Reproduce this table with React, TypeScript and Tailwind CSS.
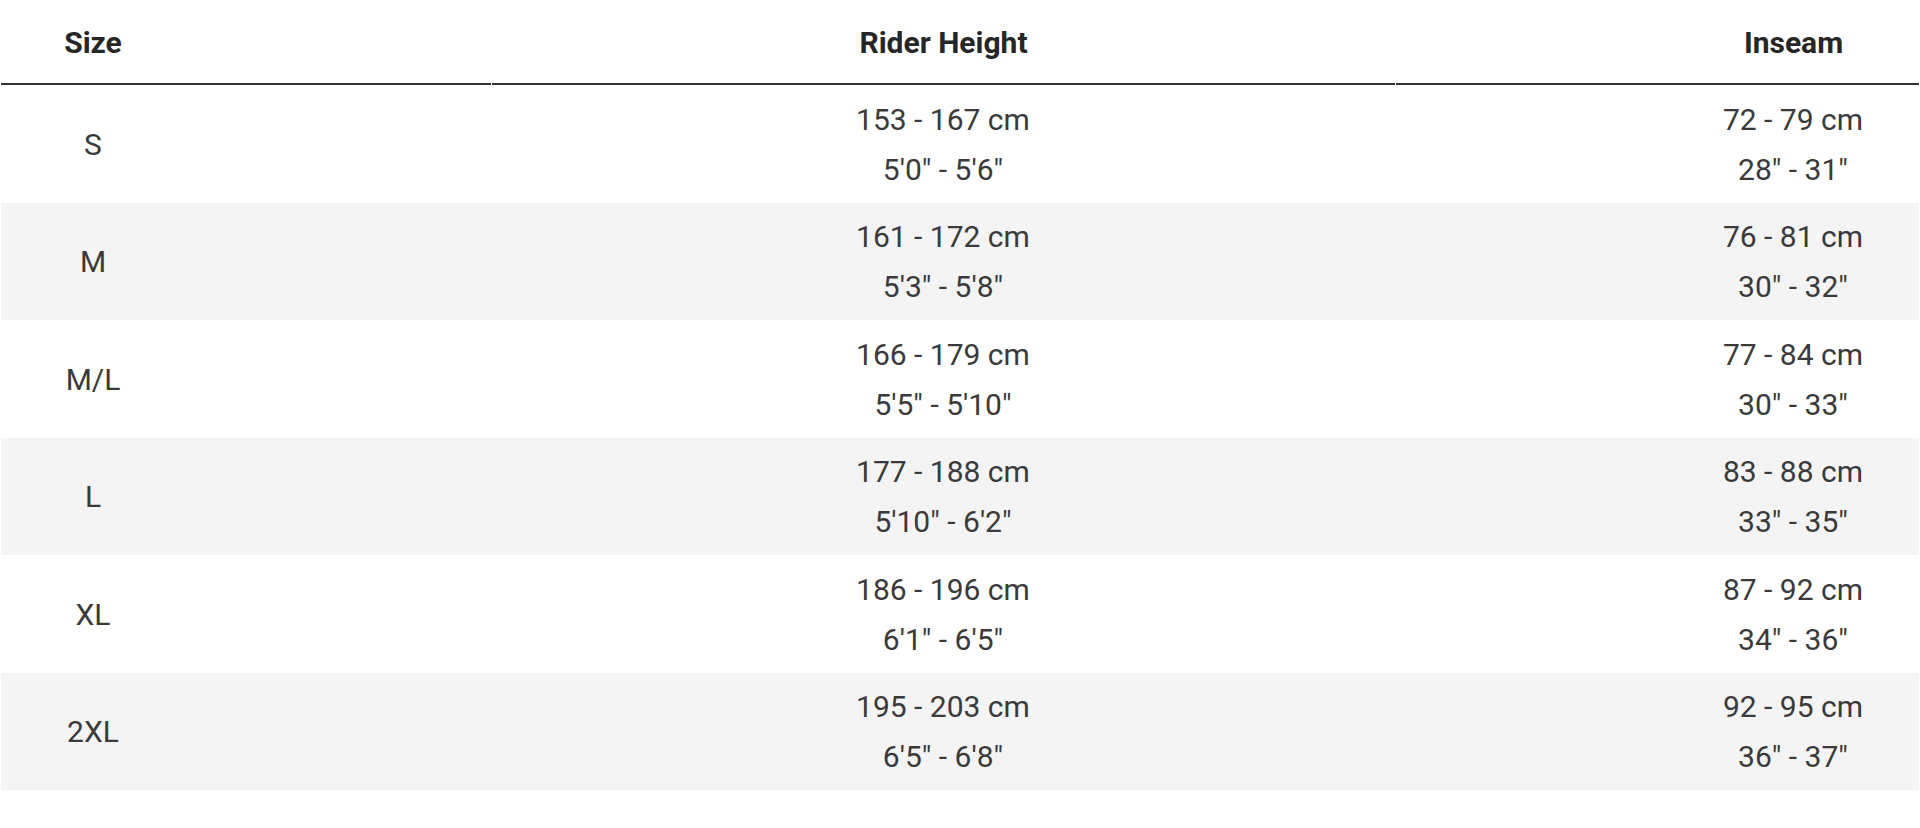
const rows = [
  { size: "S", height: ["153 - 167 cm", "5'0\" - 5'6\""], inseam: ["72 - 79 cm", "28\" - 31\""] },
  { size: "M", height: ["161 - 172 cm", "5'3\" - 5'8\""], inseam: ["76 - 81 cm", "30\" - 32\""] },
  { size: "M/L", height: ["166 - 179 cm", "5'5\" - 5'10\""], inseam: ["77 - 84 cm", "30\" - 33\""] },
  { size: "L", height: ["177 - 188 cm", "5'10\" - 6'2\""], inseam: ["83 - 88 cm", "33\" - 35\""] },
  { size: "XL", height: ["186 - 196 cm", "6'1\" - 6'5\""], inseam: ["87 - 92 cm", "34\" - 36\""] },
  { size: "2XL", height: ["195 - 203 cm", "6'5\" - 6'8\""], inseam: ["92 - 95 cm", "36\" - 37\""] },
];

function Cell({ lines }: { lines: string[] }) {
  return (
    <div className="flex flex-col items-center justify-center">
      {lines.map((l) => (
        <span key={l} className="leading-[50px]">
          {l}
        </span>
      ))}
    </div>
  );
}

export default function App() {
  return (
    <div className="min-h-[828px] w-full bg-white px-px" style={{ fontFamily: "Roboto, 'Open Sans', sans-serif" }}>
      <div className="w-full overflow-hidden">
        <div className="ml-[-306px] w-[2496px] text-[30px] text-[#3a3a3a]">
          {/* header */}
          <div className="grid grid-cols-[796px_903px_795px] gap-x-px">
            {["Size", "Rider Height", "Inseam"].map((h) => (
              <div
                key={h}
                className="flex h-[85px] items-center justify-center border-b-2 border-[#333333] pt-[2px] font-bold text-[#262626]"
              >
                {h}
              </div>
            ))}
          </div>

          {rows.map((r, i) => (
            <div
              key={r.size}
              className={`grid h-[117.5px] grid-cols-[796px_904px_796px] pt-[2px] ${
                i % 2 === 1 ? "bg-[#f4f4f4]" : "bg-white"
              }`}
            >
              <div className="flex items-center justify-center leading-[50px]">{r.size}</div>
              <Cell lines={r.height} />
              <Cell lines={r.inseam} />
            </div>
          ))}
        </div>
      </div>
    </div>
  );
}
